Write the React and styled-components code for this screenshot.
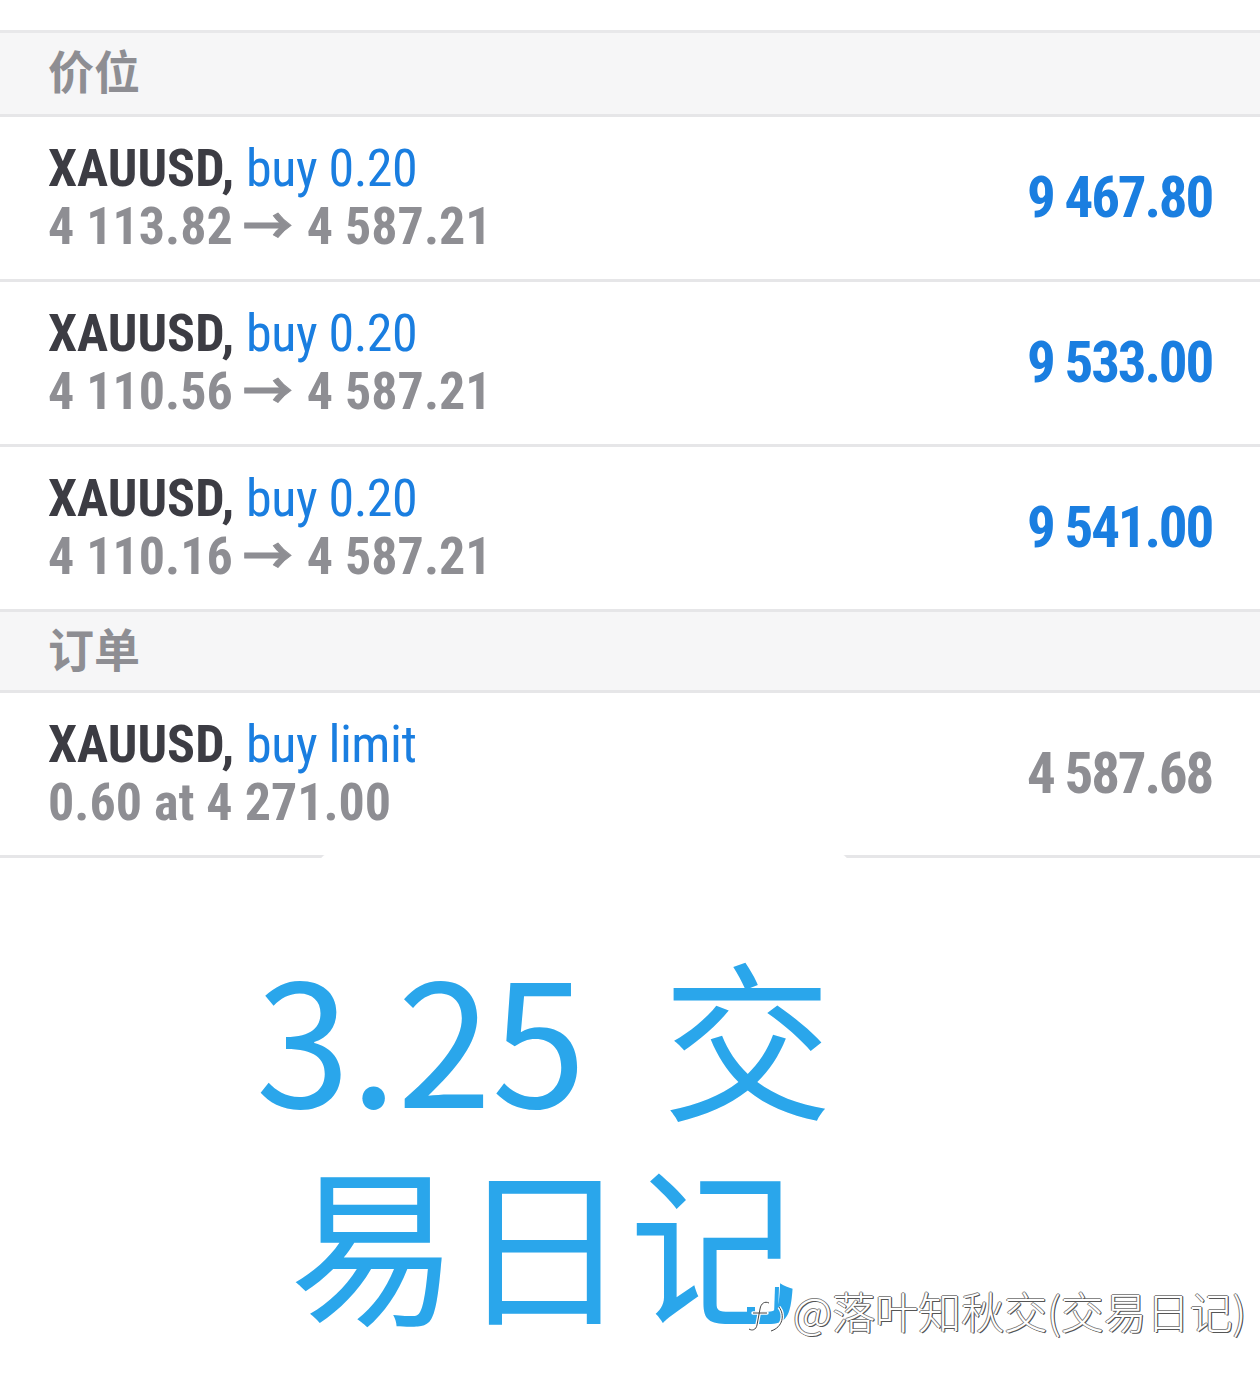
import React from "react";
import styled, { createGlobalStyle } from "styled-components";

const Global = createGlobalStyle`
  html, body { margin: 0; padding: 0; background: #ffffff; }
  body { width: 1260px; min-height: 1381px; overflow: hidden; }
`;

const COND = `"Roboto Condensed", "Liberation Sans Narrow", "DejaVu Sans Condensed", Roboto, sans-serif`;

const Page = styled.div`
  position: relative;
  width: 1260px;
  height: 1381px;
  padding-top: 30px;
  box-sizing: border-box;
  background: #fff;
  font-family: ${COND};
  font-stretch: condensed;
`;

const List = styled.div`
  border-top: 3px solid #e8e8ea;
`;

const SectionHeader = styled.div`
  height: ${(p) => p.$h}px;
  background: #f6f6f7;
  border-bottom: 3px solid #e6e6e8;
  display: flex;
  align-items: center;
  padding: 0 48px ${(p) => p.$pb}px;
  box-sizing: content-box;
  font-family: "Noto Sans CJK SC", "Noto Sans", sans-serif;
  font-weight: 700;
  font-size: 46px;
  color: #8e8e93;
`;

const Row = styled.div`
  display: flex;
  align-items: center;
  justify-content: space-between;
  padding: 23px 48px 23px;
  border-bottom: 3px solid #e6e6e8;
`;

const Info = styled.div`
  display: flex;
  flex-direction: column;
`;

const Line = styled.div`
  font-size: 52px;
  line-height: 58px;
  height: 58px;
  white-space: nowrap;
`;

const Symbol = styled.span`
  font-weight: 700;
  color: #3c3c43;
`;

const Side = styled.span`
  font-weight: 400;
  color: #1a7ee0;
  letter-spacing: -0.5px;
`;

const Prices = styled(Line)`
  font-weight: 700;
  color: #8e8e93;
`;

const Arrow = styled.span`
  display: inline-block;
  font-family: "Noto Sans CJK SC", sans-serif;
  font-stretch: normal;
  font-weight: 700;
  font-size: 50px;
  line-height: 46px;
  -webkit-text-stroke: 1px #8e8e93;
  margin: 0 14px 0 10px;
`;

const Value = styled.div`
  font-size: 57px;
  font-weight: 700;
  letter-spacing: -2.2px;
  color: ${(p) => (p.$muted ? "#8e8e93" : "#1a7ee0")};
  white-space: nowrap;
  margin-top: -2px;
`;

const Caption = styled.div`
  position: relative;
  width: 600px;
  margin: 74px 0 0 244px;
  text-align: center;
  font-family: "Noto Sans CJK SC", "Noto Sans", sans-serif;
  font-weight: 400;
  font-size: 170px;
  line-height: 205px;
  color: #2aa6eb;

  &::before {
    content: "";
    position: absolute;
    top: -79px;
    left: 74px;
    width: 532px;
    height: 14px;
    border-radius: 14px 14px 0 0;
    background: #fff;
  }
`;

const Watermark = styled.div`
  position: absolute;
  left: 745px;
  top: 1282px;
  display: flex;
  align-items: center;
  gap: 2px;
  font-family: "Noto Sans CJK SC", sans-serif;
  font-weight: 300;
  font-size: 43px;
  line-height: 56px;
  color: #ffffff;
  white-space: nowrap;
  text-shadow: 1px 1px 0 #555, -1px 0 0 #777, 0 -1px 0 #888, 1px 0 0 #444;
`;

const positions = [
  { open: "4 113.82", close: "4 587.21", profit: "9 467.80" },
  { open: "4 110.56", close: "4 587.21", profit: "9 533.00" },
  { open: "4 110.16", close: "4 587.21", profit: "9 541.00" },
];

function Logo() {
  return (
    <svg width="46" height="50" viewBox="0 0 46 50">
      <path d="M30 2 L34 2 L33 30 L29 30 Z" fill="#2aa6eb" />
      <path d="M2 22 L10 22 L10 28 L2 28 Z" fill="#2aa6eb" />
      <path
        d="M24 18 C20 16 16 18 15 24 L12 40 C11 45 7 46 4 44 M8 28 L22 28"
        fill="none"
        stroke="#fff"
        strokeWidth="3.5"
        strokeLinecap="round"
      />
      <path
        d="M24 18 C20 16 16 18 15 24 L12 40 C11 45 7 46 4 44 M8 28 L22 28"
        fill="none"
        stroke="#444"
        strokeWidth="1"
      />
      <path d="M34 22 C40 30 38 42 26 46" fill="none" stroke="#fff" strokeWidth="3.5" />
      <path d="M34 22 C40 30 38 42 26 46" fill="none" stroke="#444" strokeWidth="1" />
    </svg>
  );
}

export default function App() {
  return (
    <Page>
      <Global />
      <List>
        <SectionHeader $h={71} $pb={10}>价位</SectionHeader>
        {positions.map((p, i) => (
          <Row key={i}>
            <Info>
              <Line>
                <Symbol>XAUUSD,</Symbol> <Side>buy 0.20</Side>
              </Line>
              <Prices>
                {p.open}<Arrow>→</Arrow>{p.close}
              </Prices>
            </Info>
            <Value>{p.profit}</Value>
          </Row>
        ))}
        <SectionHeader $h={70} $pb={8}>订单</SectionHeader>
        <Row>
          <Info>
            <Line>
              <Symbol>XAUUSD,</Symbol> <Side>buy limit</Side>
            </Line>
            <Prices>0.60 at 4 271.00</Prices>
          </Info>
          <Value $muted>4 587.68</Value>
        </Row>
      </List>
      <Caption>
        3.25&nbsp;&nbsp;交
        <br />
        易日记
      </Caption>
      <Watermark>
        <Logo />
        <span>@落叶知秋交(交易日记)</span>
      </Watermark>
    </Page>
  );
}
